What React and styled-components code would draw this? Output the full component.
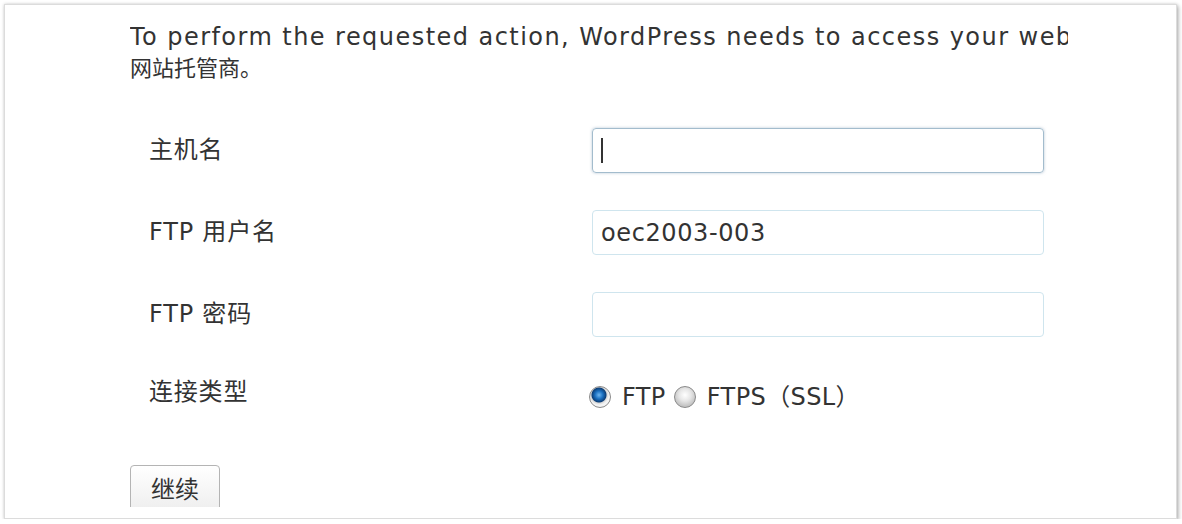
import React from "react";
import styled, { createGlobalStyle } from "styled-components";

const fields = [
  { label: "主机名", value: "", focused: true },
  { label: "FTP 用户名", value: "oec2003-003" },
  { label: "FTP 密码", value: "" },
];

const App = () => (
  <>
    <GlobalStyles />
    <Card>
      <Content>
        <Intro>
          To perform the requested action, WordPress needs to access your web
        </Intro>
        <IntroCjk>网站托管商。</IntroCjk>

        <FormTable>
          {fields.map((f) => (
            <Row key={f.label}>
              <Label>{f.label}</Label>
              <Field>
                <TextInput $focused={f.focused}>
                  {f.focused ? <Caret /> : f.value}
                </TextInput>
              </Field>
            </Row>
          ))}
          <Row>
            <Label $compact>连接类型</Label>
            <RadioGroup>
              <Radio $checked /> FTP <Radio /> FTPS（SSL）
            </RadioGroup>
          </Row>
        </FormTable>

        <Button>继续</Button>
      </Content>
    </Card>
  </>
);

const GlobalStyles = createGlobalStyle`
  html, body {
    margin: 0;
    background: #fff;
  }

  *, *::before, *::after {
    box-sizing: border-box;
  }
`;

const Card = styled.div`
  width: 1173px;
  height: 515px;
  margin: 4px 0 0 4px;
  padding-bottom: 11px;
  background: #fff;
  border: 1px solid #dcdcdc;
  box-shadow: 0 0 3px rgba(0, 0, 0, 0.18), 2px 2px 4px rgba(0, 0, 0, 0.22);
  font-family: "DejaVu Sans", "Noto Sans CJK SC", sans-serif;
  color: #333;
`;

const Content = styled.div`
  height: 100%;
  overflow: hidden;
  padding: 17px 0 0 125px;
`;

const Intro = styled.p`
  width: 938px;
  margin: 0;
  overflow: hidden;
  white-space: nowrap;
  font-size: 24px;
  line-height: 30px;
  letter-spacing: 1.45px;
`;

const IntroCjk = styled.p`
  margin: 0;
  font-family: "Noto Sans CJK SC", sans-serif;
  font-size: 22px;
  line-height: 28px;
`;

const FormTable = styled.div`
  display: grid;
  grid-template-columns: 462px 452px;
  row-gap: 37px;
  margin-top: 48px;
`;

const Row = styled.div`
  display: contents;
`;

const Label = styled.div`
  display: flex;
  align-items: center;
  align-self: start;
  padding-left: 19px;
  font-size: 24px;
  line-height: ${(p) => (p.$compact ? "36px" : "45px")};
  letter-spacing: 0.8px;
`;

const Field = styled.div`
  display: flex;
  align-items: center;
`;

const TextInput = styled.div`
  display: flex;
  align-items: center;
  width: 452px;
  height: 45px;
  padding: 0 8px;
  border-radius: 4px;
  border: 1px solid ${(p) => (p.$focused ? "#a3bccd" : "#cfe5ee")};
  box-shadow: ${(p) =>
    p.$focused ? "0 0 3px rgba(120, 150, 175, 0.55)" : "none"};
  font-size: 24px;
  letter-spacing: 0.6px;
  color: #333;
`;

const Caret = styled.span`
  display: block;
  width: 2px;
  height: 25px;
  background: #333;
`;

const RadioGroup = styled.div`
  align-self: start;
  height: 36px;
  margin: 5px 0 0 -3px;
  font-size: 24px;
  line-height: 36px;
  letter-spacing: 0.4px;
  white-space: nowrap;
`;

const Radio = styled.span`
  display: inline-block;
  vertical-align: -3px;
  width: 22px;
  height: 22px;
  margin-right: 3px;
  border-radius: 50%;
  border: 1px solid #8a8a8a;
  background: ${(p) =>
    p.$checked
      ? "radial-gradient(circle at 45% 40%, #6fb6f0 0, #1a6fc0 4px, #0d3f78 7px, #d8d8d8 8px, #f4f4f4 10px)"
      : "radial-gradient(circle at 50% 40%, #ffffff 0, #e6e6e6 6px, #c4c4c4 11px)"};
`;

const Button = styled.button`
  display: block;
  margin: 50px 0 0 0;
  width: 90px;
  height: 52px;
  padding: 0 0 8px;
  border: 1px solid #b4b4b4;
  border-radius: 4px;
  background: linear-gradient(#ffffff, #ececec);
  font-family: "Noto Sans CJK SC", sans-serif;
  font-size: 24px;
  color: #333;
`;

export default App;
